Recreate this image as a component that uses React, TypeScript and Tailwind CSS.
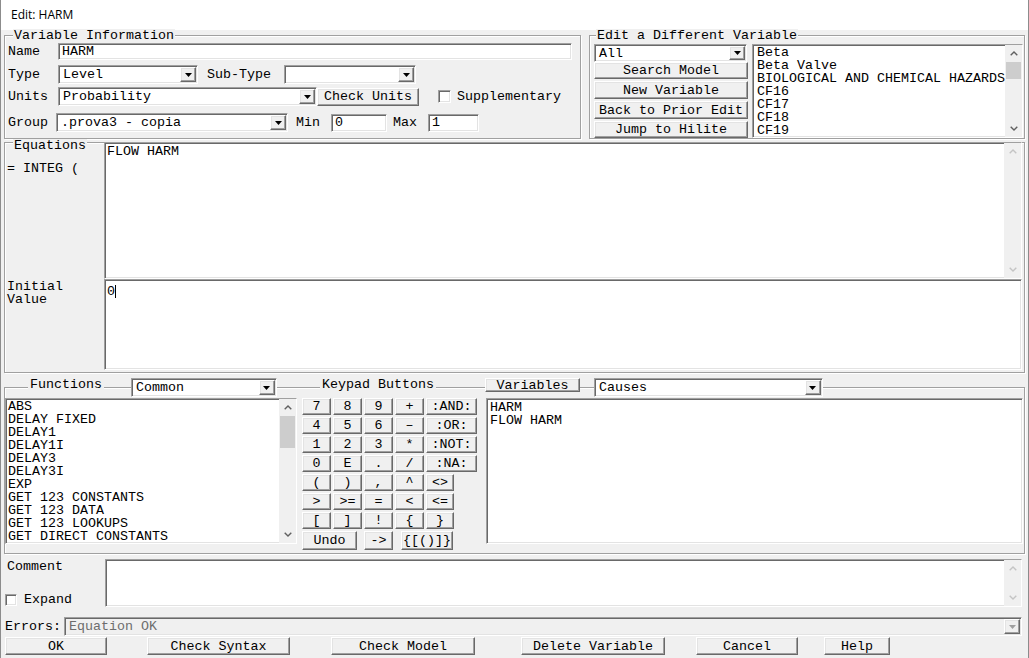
import React from "react";

const SUNKEN =
  "border border-t-[#a0a0a0] border-l-[#a0a0a0] border-b-white border-r-white shadow-[inset_1px_1px_0_#696969,inset_-1px_-1px_0_#e3e3e3]";
const RAISED =
  "border border-t-white border-l-white border-b-[#696969] border-r-[#696969] shadow-[inset_-1px_-1px_0_#a0a0a0,inset_1px_1px_0_#e3e3e3] bg-[#f0f0f0]";
const GROUP =
  "border border-[#a0a0a0] shadow-[inset_1px_1px_0_#ffffff,1px_1px_0_#ffffff]";

function Tri({ disabled }: { disabled?: boolean }) {
  return (
    <svg width="7" height="4" viewBox="0 0 7 4">
      <path d="M0 0H7L3.5 4Z" fill={disabled ? "#a0a0a0" : "#000"} />
    </svg>
  );
}

function Chev({ up, color }: { up?: boolean; color: string }) {
  return (
    <svg width="8" height="5" viewBox="0 0 8 5">
      <polyline
        points={up ? "0.7,4.3 4,1 7.3,4.3" : "0.7,0.7 4,4 7.3,0.7"}
        fill="none"
        stroke={color}
        strokeWidth="1.4"
      />
    </svg>
  );
}

function VScroll({ thumbCls, disabled }: { thumbCls?: string; disabled?: boolean }) {
  const c = disabled ? "#c4c4c4" : "#606060";
  return (
    <div className="w-[17px] bg-[#f0f0f0] flex flex-col shrink-0">
      <div className="h-[17px] flex items-center justify-center">
        <Chev up color={c} />
      </div>
      <div className="flex-1">
        {thumbCls && <div className={`bg-[#cdcdcd] mx-[1px] ${thumbCls}`} />}
      </div>
      <div className="h-[17px] flex items-center justify-center">
        <Chev color={c} />
      </div>
    </div>
  );
}

function Select({ cls, value }: { cls: string; value: string }) {
  return (
    <div className={`${SUNKEN} bg-white flex p-[1px] ${cls}`}>
      <div className="flex-1 flex items-center pl-[3px] whitespace-pre overflow-hidden">{value}</div>
      <div className={`${RAISED} w-[16px] flex items-center justify-center`}>
        <Tri />
      </div>
    </div>
  );
}

function Input({ cls, value }: { cls: string; value: string }) {
  return (
    <div className={`${SUNKEN} bg-white flex items-center pl-[3px] whitespace-pre ${cls}`}>{value}</div>
  );
}

function Btn({ cls, children }: { cls: string; children: React.ReactNode }) {
  return (
    <div className={`${RAISED} flex items-center justify-center whitespace-pre ${cls}`}>{children}</div>
  );
}

function ListBox({
  cls,
  items,
  thumbCls,
  pad,
}: {
  cls: string;
  items: string[];
  thumbCls?: string;
  pad: string;
}) {
  return (
    <div className={`${SUNKEN} bg-white flex ${cls}`}>
      <div className={`flex-1 pt-[1px] whitespace-pre overflow-hidden ${pad}`}>
        {items.map((i) => (
          <div key={i}>{i}</div>
        ))}
      </div>
      {thumbCls !== undefined && <VScroll thumbCls={thumbCls} />}
    </div>
  );
}

function Check({ cls }: { cls: string }) {
  return <div className={`${SUNKEN} bg-white ${cls}`} />;
}

const KEYS: string[][] = [
  ["7", "8", "9", "+", ":AND:"],
  ["4", "5", "6", "–", ":OR:"],
  ["1", "2", "3", "*", ":NOT:"],
  ["0", "E", ".", "/", ":NA:"],
  ["(", ")", ",", "^", "<>"],
  [">", ">=", "=", "<", "<="],
  ["[", "]", "!", "{", "}"],
];

export default function App() {
  return (
    <div className="w-[1029px] h-[658px] bg-[#f0f0f0] border-l border-r border-[#8c8c8c] flex flex-col overflow-hidden text-black font-['Liberation_Mono','Courier_New',monospace] text-[13.33px] leading-[13px]">
      {/* Title bar */}
      <div className="h-[30px] shrink-0 bg-white flex items-center pl-[10px] text-[12px] leading-[16px] font-['Segoe_UI','Open_Sans',sans-serif]">
        Edit: HARM
      </div>

      {/* Top row */}
      <div className="flex ml-[3px] mt-[5px] gap-[8px]">
        <div className={`${GROUP} w-[577px] h-[104px] flex flex-col`}>
          <div className="-mt-[7px] ml-[8px] px-[1px] bg-[#f0f0f0] self-start">Variable Information</div>
          <div className="flex flex-col pl-[3px] mt-[1px]">
            <div className="flex items-center h-[17px]">
              <span className="w-[50px]">Name</span>
              <Input cls="w-[514px] h-[17px]" value="HARM" />
            </div>
            <div className="flex items-center h-[19px] mt-[5px]">
              <span className="w-[50px]">Type</span>
              <Select cls="w-[140px] h-[19px]" value="Level" />
              <span className="ml-[9px] w-[77px]">Sub-Type</span>
              <Select cls="w-[132px] h-[19px]" value="" />
            </div>
            <div className="flex items-center h-[19px] mt-[3px]">
              <span className="w-[50px]">Units</span>
              <Select cls="w-[259px] h-[19px]" value="Probability" />
              <Btn cls="w-[102px] h-[18px]">Check Units</Btn>
              <Check cls="ml-[19px] w-[13px] h-[13px]" />
              <span className="ml-[6px]">Supplementary</span>
            </div>
            <div className="flex items-center h-[19px] mt-[7px]">
              <span className="w-[48px]">Group</span>
              <Select cls="w-[232px] h-[19px]" value=".prova3 - copia" />
              <span className="ml-[8px] w-[35px]">Min</span>
              <Input cls="w-[56px] h-[18px]" value="0" />
              <span className="ml-[6px] w-[35px]">Max</span>
              <Input cls="w-[51px] h-[18px]" value="1" />
            </div>
          </div>
        </div>

        <div className={`${GROUP} w-[436px] h-[104px] flex flex-col`}>
          <div className="-mt-[7px] ml-[6px] px-[1px] bg-[#f0f0f0] self-start">Edit a Different Variable</div>
          <div className="flex mt-[2px] pl-[4px]">
            <div className="w-[154px] flex flex-col">
              <Select cls="w-[153px] h-[18px]" value="All" />
              <Btn cls="h-[17px]">Search Model</Btn>
              <Btn cls="h-[18px] mt-[2px]">New Variable</Btn>
              <Btn cls="h-[18px] mt-[2px]">Back to Prior Edit</Btn>
              <Btn cls="h-[17px] mt-[2px]">Jump to Hilite</Btn>
            </div>
            <ListBox
              cls="ml-[4px] w-[271px] h-[94px]"
              pad="pl-[4px]"
              thumbCls="h-[17px]"
              items={[
                "Beta",
                "Beta Valve",
                "BIOLOGICAL AND CHEMICAL HAZARDS",
                "CF16",
                "CF17",
                "CF18",
                "CF19",
              ]}
            />
          </div>
        </div>
      </div>

      {/* Equations group */}
      <div className={`${GROUP} ml-[3px] mt-[3px] w-[1021px] h-[231px] flex flex-col shrink-0`}>
        <div className="flex h-[137px] -mt-[1px]">
          <div className="w-[99px] flex flex-col">
            <div className="-mt-[3px] ml-[8px] px-[1px] bg-[#f0f0f0] self-start">Equations</div>
            <div className="mt-[10px] pl-[2px] whitespace-pre">= INTEG (</div>
          </div>
          <div className={`${SUNKEN} bg-white w-[918px] h-[137px] flex`}>
            <div className="flex-1 pt-[2px] pl-[2px] whitespace-pre">FLOW HARM</div>
            <VScroll disabled />
          </div>
        </div>
        <div className="flex h-[92px]">
          <div className="w-[99px] pl-[2px] pt-[1px]">
            <div>Initial</div>
            <div>Value</div>
          </div>
          <div className={`${SUNKEN} bg-white w-[918px] h-[91px] pt-[5px] pl-[2px] flex items-start`}>
            <span>0</span>
            <span className="inline-block w-[1px] h-[13px] bg-black" />
          </div>
        </div>
      </div>

      {/* Functions / keypad / variables group */}
      <div className={`${GROUP} ml-[3px] mt-[14px] w-[1021px] h-[167px] flex flex-col shrink-0`}>
        <div className="flex items-start h-[19px] -mt-[10px]">
          <span className="ml-[23px] px-[2px] bg-[#f0f0f0]">Functions</span>
          <Select cls="ml-[27px] w-[146px] h-[19px]" value="Common" />
          <span className="ml-[43px] px-[2px] bg-[#f0f0f0]">Keypad Buttons</span>
          <Btn cls="ml-[49px] w-[95px] h-[14px]">Variables</Btn>
          <Select cls="ml-[14px] w-[229px] h-[19px]" value="Causes" />
        </div>
        <div className="flex mt-[1px]">
          <ListBox
            cls="w-[292px] h-[146px]"
            pad="pl-[2px]"
            thumbCls="h-[32px]"
            items={[
              "ABS",
              "DELAY FIXED",
              "DELAY1",
              "DELAY1I",
              "DELAY3",
              "DELAY3I",
              "EXP",
              "GET 123 CONSTANTS",
              "GET 123 DATA",
              "GET 123 LOOKUPS",
              "GET DIRECT CONSTANTS",
            ]}
          />
          <div className="ml-[5px] w-[176px] flex flex-col gap-[2px]">
            {KEYS.map((row, ri) => (
              <div key={ri} className="flex gap-[2px]">
                {row.map((k, ci) => (
                  <Btn
                    key={k}
                    cls={
                      ci < 4
                        ? "w-[29px] h-[17px]"
                        : ri < 4
                        ? "w-[51px] h-[17px]"
                        : "w-[28px] h-[17px]"
                    }
                  >
                    {k}
                  </Btn>
                ))}
              </div>
            ))}
            <div className="flex">
              <Btn cls="w-[55px] h-[19px]">Undo</Btn>
              <Btn cls="ml-[7px] w-[29px] h-[19px]">{"->"}</Btn>
              <Btn cls="ml-[8px] w-[52px] h-[19px]">{"{[()]}"}</Btn>
            </div>
          </div>
          <ListBox cls="ml-[8px] w-[537px] h-[146px]" pad="pl-[3px] pt-[2px]" items={["HARM", "FLOW HARM"]} />
        </div>
      </div>

      {/* Comment */}
      <div className="flex mt-[5px]">
        <div className="w-[104px] h-[48px] flex flex-col justify-between pl-[4px]">
          <div className="pl-[2px] mt-[1px]">Comment</div>
          <div className="flex items-center mb-[1px] h-[13px]">
            <Check cls="w-[12px] h-[12px]" />
            <span className="ml-[7px]">Expand</span>
          </div>
        </div>
        <div className={`${SUNKEN} bg-white w-[917px] h-[48px] flex`}>
          <div className="flex-1" />
          <VScroll disabled />
        </div>
      </div>

      {/* Errors */}
      <div className="flex items-center mt-[10px] h-[19px] pl-[4px]">
        <span className="w-[59px]">Errors:</span>
        <div className={`${SUNKEN} bg-[#f0f0f0] w-[958px] h-[19px] flex p-[1px]`}>
          <div className="flex-1 flex items-center pl-[3px] text-[#6d6d6d]">Equation OK</div>
          <div className={`${RAISED} w-[16px] flex items-center justify-center`}>
            <Tri disabled />
          </div>
        </div>
      </div>

      {/* Buttons */}
      <div className="flex mt-[1px] h-[18px] pl-[4px]">
        <Btn cls="w-[102px] h-[18px]">OK</Btn>
        <Btn cls="ml-[40px] w-[143px] h-[18px]">Check Syntax</Btn>
        <Btn cls="ml-[41px] w-[144px] h-[18px]">Check Model</Btn>
        <Btn cls="ml-[46px] w-[144px] h-[18px]">Delete Variable</Btn>
        <Btn cls="ml-[31px] w-[102px] h-[18px]">Cancel</Btn>
        <Btn cls="ml-[26px] w-[66px] h-[18px]">Help</Btn>
      </div>
    </div>
  );
}
